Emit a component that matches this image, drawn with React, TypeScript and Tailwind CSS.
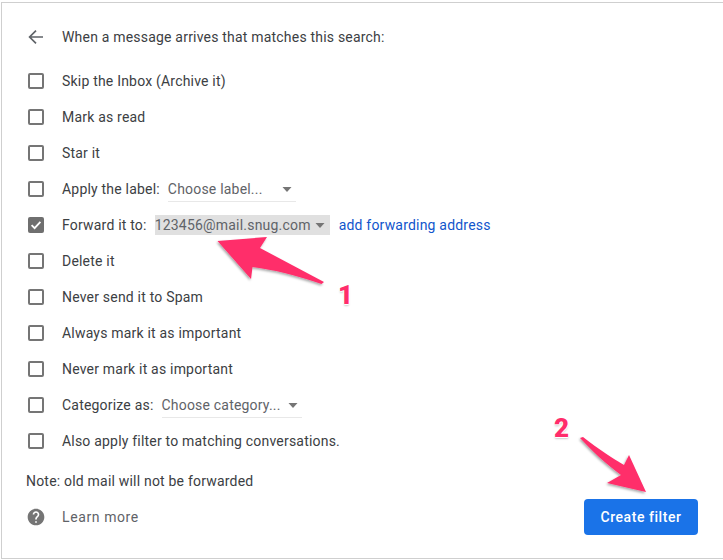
import type { ReactNode } from "react";

function Box({ checked = false }: { checked?: boolean }) {
  if (checked) {
    return (
      <div className="w-[16px] h-[16px] rounded-[2px] bg-[#6f6f6f] flex items-center justify-center shrink-0">
        <svg width="12" height="12" viewBox="0 0 12 12" fill="none">
          <path d="M1.6 6.2 4.6 9.2 10.4 2.8" stroke="#fff" strokeWidth="1.8" />
        </svg>
      </div>
    );
  }
  return <div className="w-[16px] h-[16px] rounded-[2px] border-2 border-[#757575] shrink-0" />;
}

function Caret({ color = "#757575" }: { color?: string }) {
  return (
    <svg width="10" height="5" viewBox="0 0 10 5" className="shrink-0">
      <path d="M0.5 0H9.5L5 5Z" fill={color} />
    </svg>
  );
}

function Row({ checked, children }: { checked?: boolean; children: ReactNode }) {
  return (
    <div className="h-[36px] flex items-center">
      <div className="w-[36px] flex items-center pl-[2px]">
        <Box checked={checked} />
      </div>
      {children}
    </div>
  );
}

export default function App() {
  return (
    <div
      className="relative w-[723px] h-[560px] bg-white overflow-hidden pt-[2px] pl-[1px] pb-[1px] text-[14px] tracking-[0.2px] text-[#3c4043]"
      style={{ fontFamily: "Roboto, sans-serif" }}
    >
      <div className="h-full border-t border-l border-b border-[#cfcfcf] pl-[24px] pr-[25px] flex flex-col">
        {/* header */}
        <div className="h-[36px] mt-[16px] flex items-center">
          <div className="w-[36px] flex items-center">
            <svg width="18" height="18" viewBox="0 0 18 18" fill="none" className="ml-[1px]">
              <path d="M16 9H3M9 2.6 2.6 9 9 15.4" stroke="#5f6368" strokeWidth="1.7" />
            </svg>
          </div>
          <span>When a message arrives that matches this search:</span>
        </div>

        <div className="mt-[8px] flex flex-col">
          <Row><span>Skip the Inbox (Archive it)</span></Row>
          <Row><span>Mark as read</span></Row>
          <Row><span>Star it</span></Row>
          <Row>
            <span>Apply the label:</span>
            <div className="ml-[8px] w-[128px] h-[24px] mt-[2px] border-b border-[#e8e8e8] flex items-center justify-between pr-[4px] text-[#5f6368]">
              <span>Choose label...</span>
              <Caret />
            </div>
          </Row>
          <Row checked>
            <span>Forward it to:</span>
            <div className="ml-[8px] w-[175px] h-[20px] bg-[#e0e0e0] flex items-center justify-between pr-[5px] text-[#5f6368]">
              <span>123456@mail.snug.com</span>
              <Caret />
            </div>
            <span className="ml-[9px] text-[#1155cc]">add forwarding address</span>
          </Row>
          <Row><span>Delete it</span></Row>
          <Row><span>Never send it to Spam</span></Row>
          <Row><span>Always mark it as important</span></Row>
          <Row><span>Never mark it as important</span></Row>
          <Row>
            <span>Categorize as:</span>
            <div className="ml-[8px] w-[140px] h-[24px] mt-[2px] border-b border-[#e8e8e8] flex items-center justify-between pr-[4px] text-[#5f6368]">
              <span>Choose category...</span>
              <Caret />
            </div>
          </Row>
          <Row><span>Also apply filter to matching conversations.</span></Row>
        </div>

        {/* footer */}
        <div className="flex-1 flex justify-between">
          <div className="flex flex-col">
            <div className="h-[20px] mt-[12px] flex items-center">Note: old mail will not be forwarded</div>
            <div className="h-[36px] mt-[8px] flex items-center text-[#5f6368] tracking-[0.6px]">
              <div className="w-[36px]">
                <svg width="20" height="20" viewBox="0 0 24 24" fill="#757575">
                  <path d="M12 2C6.48 2 2 6.48 2 12s4.48 10 10 10 10-4.48 10-10S17.52 2 12 2zm1 17h-2v-2h2v2zm2.07-7.75-.9.92C13.45 12.9 13 13.5 13 15h-2v-.5c0-1.1.45-2.1 1.17-2.83l1.24-1.26c.37-.36.59-.86.59-1.41 0-1.1-.9-2-2-2s-2 .9-2 2H8c0-2.21 1.79-4 4-4s4 1.79 4 4c0 .88-.36 1.68-.93 2.25z" />
                </svg>
              </div>
              <span>Learn more</span>
            </div>
          </div>
          <button className="mt-[40px] w-[114px] h-[36px] rounded-[4px] bg-[#1a73e8] text-white font-medium tracking-[0.55px]">
            Create filter
          </button>
        </div>
      </div>

      {/* annotations */}
      <svg width="723" height="560" className="absolute left-0 top-0 pointer-events-none">
        <defs>
          <filter id="arrowShadow" x="-20%" y="-20%" width="140%" height="140%">
            <feDropShadow dx="-1" dy="1.5" stdDeviation="1.2" floodColor="#000" floodOpacity="0.35" />
          </filter>
        </defs>
        <path
          d="M217.5 241 267 237 260 248 324 282 321.5 284 C295 275 275 270 252.5 267 L251 279Z"
          fill="#ff2d6b"
          filter="url(#arrowShadow)"
        />
        <path
          d="M580 438 583 437 C600 450 612 458 624 465 L629 455 646 492 607 483 621 475 C605 463 592 451 580 438Z"
          fill="#ff2d6b"
          filter="url(#arrowShadow)"
        />
      </svg>
      <span
        className="absolute left-[338px] top-[281px] text-[26px] leading-[28px] font-black text-[#ff2d6b] tracking-normal"
        style={{ textShadow: "1px 0 0 #fff, -1px 0 0 #fff, 0 -1px 0 #fff, 0 1px 0 #fff, 0 2px 2px #ccc" }}
      >
        1
      </span>
      <span
        className="absolute left-[554px] top-[414px] text-[26px] leading-[28px] font-black text-[#ff2d6b] tracking-normal"
        style={{ textShadow: "1px 0 0 #fff, -1px 0 0 #fff, 0 -1px 0 #fff, 0 1px 0 #fff, 0 2px 2px #ccc" }}
      >
        2
      </span>
    </div>
  );
}
